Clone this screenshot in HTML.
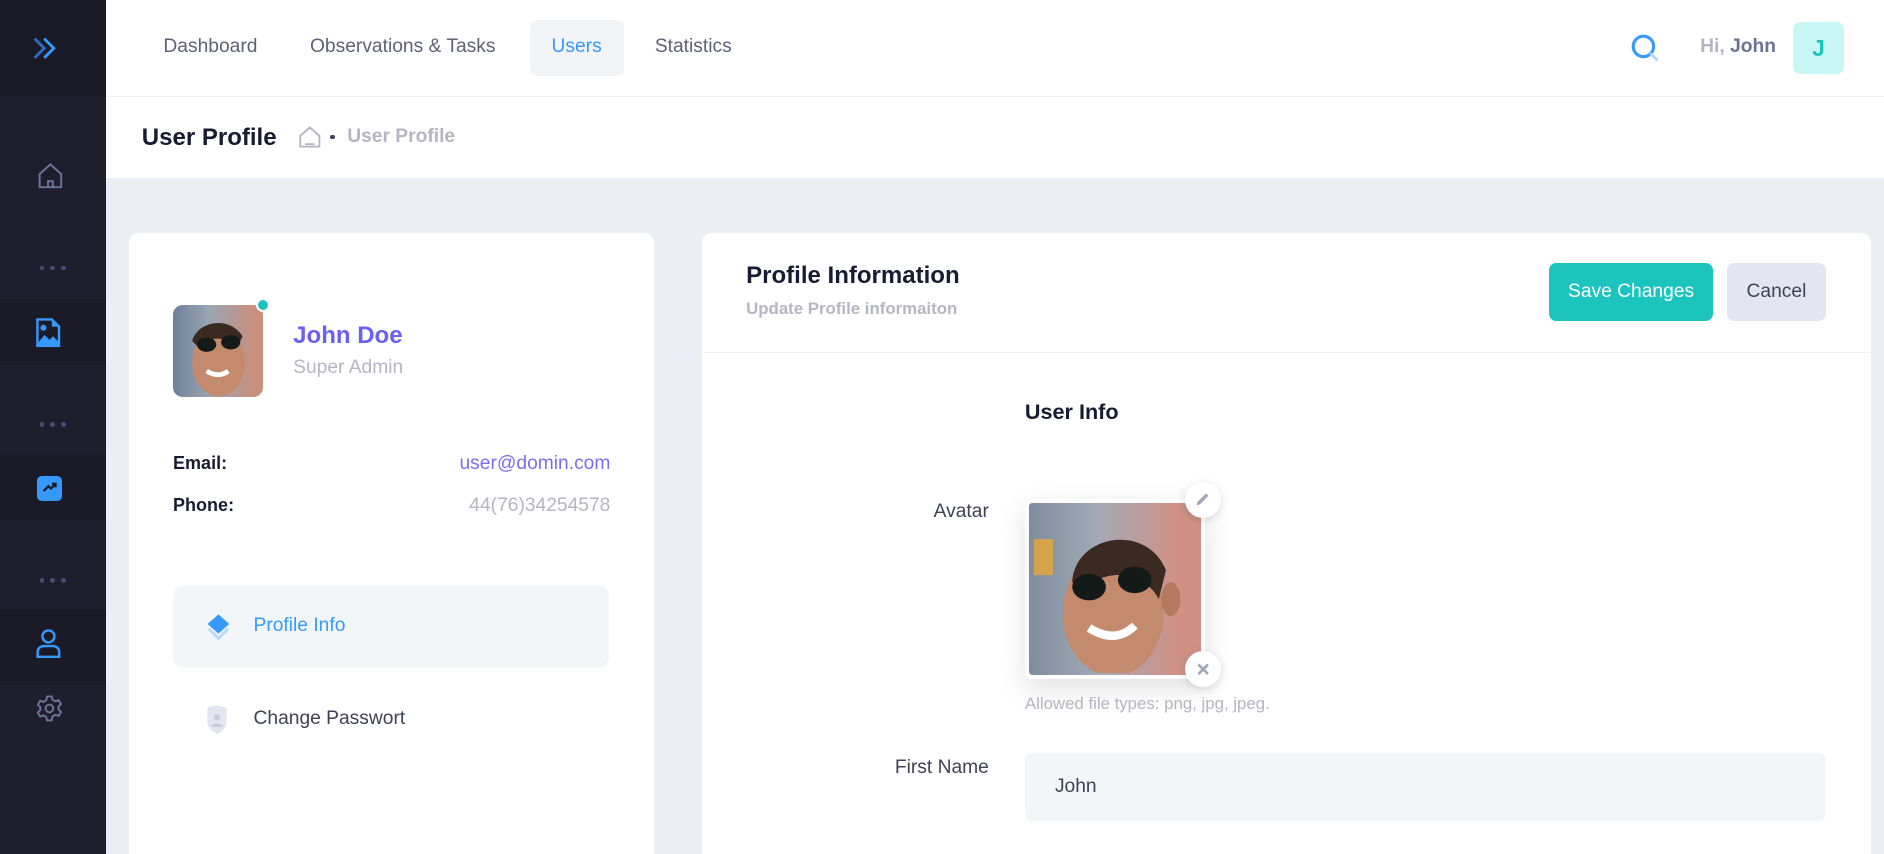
<!DOCTYPE html>
<html><head><meta charset="utf-8"><style>
*{box-sizing:border-box;margin:0;padding:0}
html,body{width:1884px;height:854px;overflow:hidden;background:#eef0f8}
#r{zoom:1.20153;width:1568px;height:711px;position:relative;font-family:"Liberation Sans",Arial,sans-serif;background:#eceef6;overflow:hidden}
.a{position:absolute}
.side{left:0;top:0;width:88px;height:711px;background:#1e1e2d}
.nav{font-size:16px;color:#5e6278;top:30px}
.dots{left:33px;width:22px;height:4px;display:flex;justify-content:space-between}
.dots i{width:4px;height:4px;border-radius:2px;background:#494b74;display:block}
.card{background:#fff;border-radius:8px}
</style></head><body><div id="r">
<div class="a side"></div>
<div class="a" style="left:0;top:0;width:88px;height:80px;background:#1a1a27"></div>
<svg class="a" style="left:26px;top:29px" width="24" height="22" viewBox="0 0 24 22"><path d="M3 3l8 8-8 8" fill="none" stroke="#2e6bc4" stroke-width="2.4"/><path d="M11 3l8 8-8 8" fill="none" stroke="#3699ff" stroke-width="2.4"/></svg>
<svg class="a" style="left:30px;top:135px" width="24" height="24" viewBox="0 0 24 24"><path d="M3 21V10l9-8 9 8v11z M10 21v-5h4v5" fill="none" stroke="#6d7599" stroke-width="1.6"/></svg>
<div class="a dots" style="top:221px"><i></i><i></i><i></i></div>
<div class="a" style="left:0;top:249px;width:88px;height:55px;background:#1b1b28"></div>
<svg class="a" style="left:29px;top:264px" width="22" height="26" viewBox="0 0 22 26"><path d="M2 2h12l6 6v16H2z" fill="none" stroke="#3699ff" stroke-width="2"/><path d="M14 2v6h6z" fill="#3699ff"/><circle cx="7" cy="9" r="2.5" fill="#3699ff"/><path d="M2 22l6-7 4 4 3-3 5 5v3H2z" fill="#3699ff"/></svg>
<div class="a dots" style="top:351px"><i></i><i></i><i></i></div>
<div class="a" style="left:0;top:378px;width:88px;height:55px;background:#1b1b28"></div>
<div class="a" style="left:31px;top:396px;width:21px;height:21px;border-radius:4px;background:#3699ff"></div>
<svg class="a" style="left:33px;top:399px" width="17" height="14" viewBox="0 0 17 14"><path d="M3 10l4-4 2 2 4-4M10 4h3v3" fill="none" stroke="#1b1b28" stroke-width="1.8"/></svg>
<div class="a dots" style="top:481px"><i></i><i></i><i></i></div>
<div class="a" style="left:0;top:508px;width:88px;height:62px;background:#1b1b28"></div>
<svg class="a" style="left:28px;top:523px" width="24" height="26" viewBox="0 0 24 26"><circle cx="12" cy="7" r="5" fill="none" stroke="#3699ff" stroke-width="2"/><path d="M3 24v-4a5 5 0 0 1 5-5h8a5 5 0 0 1 5 5v4z" fill="none" stroke="#3699ff" stroke-width="2"/></svg>
<svg class="a" style="left:29px;top:578px" width="24" height="24" viewBox="0 0 24 24"><circle cx="12" cy="12" r="3.2" fill="none" stroke="#6d7599" stroke-width="1.6"/><path d="M10 2h4l.6 2.8 2.4 1.3 2.7-1 2 3.4-2.1 1.9v2.6l2.1 1.9-2 3.4-2.7-1-2.4 1.4L14 22h-4l-.6-2.8-2.4-1.4-2.7 1-2-3.4 2.1-1.9V10.9L2.3 9l2-3.4 2.7 1 2.4-1.3z" fill="none" stroke="#6d7599" stroke-width="1.6" stroke-linejoin="round"/></svg>

<div class="a" style="left:88px;top:0;width:1480px;height:81px;background:#fff;border-bottom:1px solid #eff2f5"></div>
<div class="a nav" style="left:136px">Dashboard</div>
<div class="a nav" style="left:258px">Observations &amp; Tasks</div>
<div class="a" style="left:441px;top:17px;width:78px;height:46px;background:#f3f4f8;border-radius:6px"></div>
<div class="a nav" style="left:459px;color:#3699ff">Users</div>
<div class="a nav" style="left:545px">Statistics</div>
<svg class="a" style="left:1356px;top:27px" width="28" height="28" viewBox="0 0 28 28"><circle cx="12" cy="12" r="8.5" fill="none" stroke="#3699ff" stroke-width="2.6"/><path d="M18.5 18.5l4.5 4.5" stroke="#b8d8ff" stroke-width="2.6" stroke-linecap="round"/></svg>
<div class="a" style="left:1415px;top:30px;font-size:16px;font-weight:bold;color:#b5b5c3">Hi, <span style="color:#6c7293">John</span></div>
<div class="a" style="left:1492px;top:18px;width:43px;height:44px;border-radius:6px;background:#c9f7f5;color:#1bc5bd;font-size:19px;font-weight:bold;text-align:center;line-height:44px">J</div>

<div class="a" style="left:88px;top:81px;width:1480px;height:67px;background:#fff"></div>
<div class="a" style="left:118px;top:103px;font-size:20px;font-weight:bold;color:#181c32">User Profile</div>
<svg class="a" style="left:249px;top:104px" width="18" height="20" viewBox="0 0 18 20"><path d="M1 18V9l8-7 8 7v9z M5 16h8" fill="none" stroke="#b5b5c3" stroke-width="1.5"/></svg>
<div class="a" style="left:275px;top:112px;width:4px;height:4px;border-radius:2px;background:#3f4254"></div>
<div class="a" style="left:289px;top:105px;font-size:16px;font-weight:bold;color:#b5b5c3">User Profile</div>

<div class="a card" style="left:107px;top:194px;width:437px;height:540px"></div>
<div class="a" style="left:144px;top:254px;width:75px;height:76px;border-radius:8px;overflow:hidden;background:linear-gradient(90deg,#6d8099,#9aa5b4 40%,#c98f7d 90%)">
<svg width="75" height="76" viewBox="0 0 75 76"><ellipse cx="38" cy="48" rx="22" ry="28" fill="#c48a6e"/><path d="M16 30c4-16 30-22 42-4l-4 8c-8-8-26-8-34 0z" fill="#3a2a22"/><ellipse cx="28" cy="33" rx="8" ry="6" fill="#141a18"/><ellipse cx="48" cy="31" rx="8" ry="6" fill="#141a18"/><path d="M28 55q10 6 18 0" stroke="#fff" stroke-width="4" fill="none"/></svg></div>
<div class="a" style="left:213px;top:248px;width:12px;height:12px;border-radius:6px;background:#1bc5bd;border:2px solid #fff"></div>
<div class="a" style="left:244px;top:268px;font-size:20px;font-weight:bold;color:#6c5ff5">John Doe</div>
<div class="a" style="left:244px;top:297px;font-size:16px;color:#b5b5c3">Super Admin</div>
<div class="a" style="left:144px;top:377px;font-size:15px;font-weight:bold;color:#181c32">Email:</div>
<div class="a" style="right:1060px;top:377px;font-size:16px;color:#7e6cf0">user@domin.com</div>
<div class="a" style="left:144px;top:412px;font-size:15px;font-weight:bold;color:#181c32">Phone:</div>
<div class="a" style="right:1060px;top:412px;font-size:16px;color:#b5b5c3">44(76)34254578</div>
<div class="a" style="left:144px;top:488px;width:363px;height:67px;border-radius:8px;background:#f3f6f9"></div>
<svg class="a" style="left:170px;top:509px" width="24" height="24" viewBox="0 0 24 24"><path d="M4 14l8 8 8-8" fill="none" stroke="#b8d8ff" stroke-width="2.5"/><path d="M12 2l9 8-9 8-9-8z" fill="#3699ff"/></svg>
<div class="a" style="left:211px;top:512px;font-size:16px;color:#3699ff">Profile Info</div>
<svg class="a" style="left:171px;top:586px" width="20" height="26" viewBox="0 0 20 26"><path d="M2 3l8-2 8 2v12c0 5-4 8-8 10-4-2-8-5-8-10z" fill="#e4e6ef"/><circle cx="10" cy="11" r="2.5" fill="#c9cbd6"/><path d="M5 19q5-6 10 0z" fill="#c9cbd6"/></svg>
<div class="a" style="left:211px;top:589px;font-size:16px;color:#3f4254">Change Passwort</div>

<div class="a card" style="left:584px;top:194px;width:973px;height:540px"></div>
<div class="a" style="left:584px;top:293px;width:973px;height:1px;background:#eff2f5"></div>
<div class="a" style="left:621px;top:218px;font-size:20px;font-weight:bold;color:#181c32">Profile Information</div>
<div class="a" style="left:621px;top:249px;font-size:14px;font-weight:bold;color:#b5b5c3">Update Profile informaiton</div>
<div class="a" style="left:1289px;top:219px;width:137px;height:48px;border-radius:6px;background:#1bc5bd;color:#fff;font-size:16px;text-align:center;line-height:48px">Save Changes</div>
<div class="a" style="left:1437px;top:219px;width:83px;height:48px;border-radius:6px;background:#e4e6ef;color:#3f4254;font-size:16px;text-align:center;line-height:48px">Cancel</div>
<div class="a" style="left:853px;top:332px;font-size:18px;font-weight:bold;color:#181c32">User Info</div>
<div class="a" style="right:745px;top:417px;font-size:16px;color:#3f4254">Avatar</div>
<div class="a" style="left:853px;top:415px;width:150px;height:150px;border:4px solid #fff;border-radius:6px;box-shadow:0 8px 24px rgba(0,0,0,.12);overflow:hidden;background:linear-gradient(90deg,#7e8da0,#a3a9b5 40%,#cf9186 85%)">
<svg width="142" height="142" viewBox="0 0 142 142"><rect x="4" y="30" width="16" height="30" fill="#e8a836" opacity=".8"/><ellipse cx="70" cy="92" rx="42" ry="52" fill="#c48a6e"/><path d="M36 66c2-40 62-50 78-10l-6 24c-10-20-40-30-66-6z" fill="#3a2a22"/><ellipse cx="50" cy="70" rx="14" ry="11" fill="#141a18"/><ellipse cx="88" cy="64" rx="14" ry="11" fill="#141a18"/><path d="M50 104q22 14 38-2" stroke="#fff" stroke-width="7" fill="none"/><ellipse cx="118" cy="80" rx="8" ry="14" fill="#b37a5f"/></svg></div>
<div class="a" style="left:986px;top:401px;width:30px;height:30px;border-radius:15px;background:#fff;box-shadow:0 2px 8px rgba(0,0,0,.15)"></div>
<svg class="a" style="left:994px;top:409px" width="14" height="14" viewBox="0 0 14 14"><path d="M2 12l1-3 7-7 2 2-7 7z" fill="#a1a5b7"/></svg>
<div class="a" style="left:986px;top:542px;width:30px;height:30px;border-radius:15px;background:#fff;box-shadow:0 2px 8px rgba(0,0,0,.15)"></div>
<svg class="a" style="left:995px;top:551px" width="12" height="12" viewBox="0 0 12 12"><path d="M2 2l8 8M10 2l-8 8" stroke="#a1a5b7" stroke-width="2.2"/></svg>
<div class="a" style="left:853px;top:578px;font-size:14px;color:#b5b5c3">Allowed file types: png, jpg, jpeg.</div>
<div class="a" style="right:745px;top:630px;font-size:16px;color:#3f4254">First Name</div>
<div class="a" style="left:853px;top:627px;width:667px;height:56px;border-radius:6px;background:#f3f6f9"></div>
<div class="a" style="left:878px;top:646px;font-size:16px;color:#3f4254">John</div>
</div></body></html>
